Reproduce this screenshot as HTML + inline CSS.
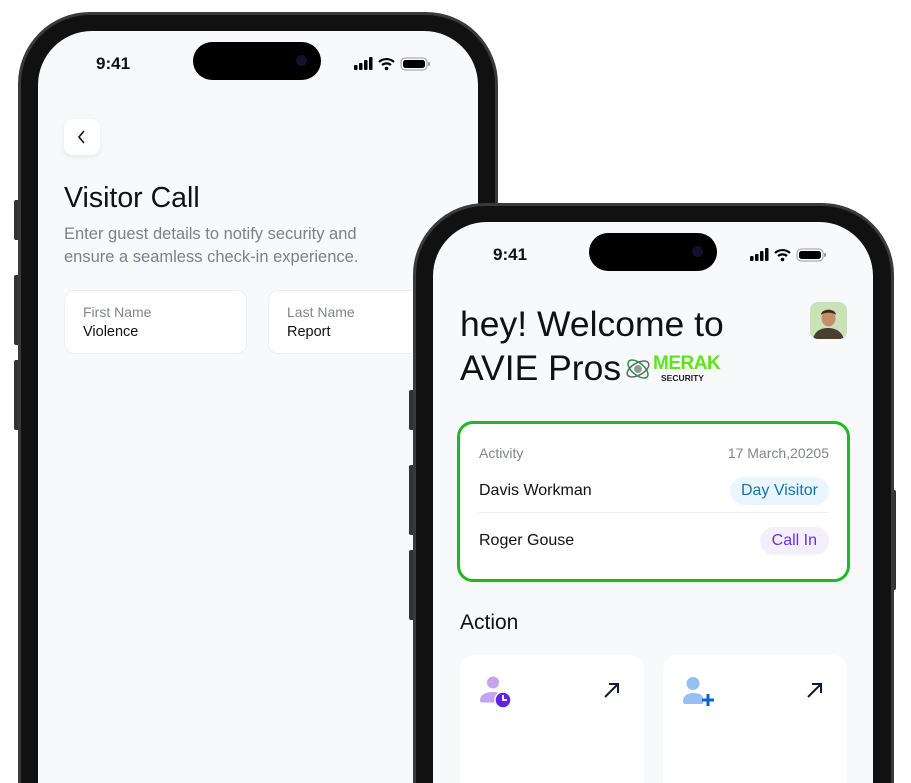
<!DOCTYPE html>
<html><head><meta charset="utf-8"><style>
*{margin:0;padding:0;box-sizing:border-box}
html{width:911px;height:783px;overflow:hidden}
body{width:911px;height:783px;background:#fff;position:relative;overflow:hidden;font-family:"Liberation Sans",sans-serif}
#wrap{position:absolute;left:0;top:0;width:911px;height:783px;overflow:hidden}
.frame{position:absolute;background:#111;border:3px solid #3a3a3a}
.screen{position:absolute;background:#f8f9fb;overflow:hidden}
.island{position:absolute;width:128px;height:38px;background:#000;border-radius:19px}
.island i{position:absolute;right:14px;top:13px;width:11px;height:11px;border-radius:50%;background:#10122a}
.time{position:absolute;font-weight:bold;font-size:17px;color:#111}
.stat{position:absolute}
.abs{position:absolute}
</style></head><body><div id="wrap">

<div class="abs" style="left:14px;top:200px;width:6px;height:40px;background:#333;border-radius:2px"></div>
<div class="abs" style="left:14px;top:275px;width:6px;height:70px;background:#333;border-radius:2px"></div>
<div class="abs" style="left:14px;top:360px;width:6px;height:70px;background:#333;border-radius:2px"></div>

<div class="frame" style="left:18px;top:12px;width:480px;height:860px;border-radius:72px"></div>
<div class="screen" style="left:38px;top:31px;width:440px;height:830px;border-radius:54px">
  <div class="island" style="left:155px;top:11px"><i></i></div>
  <div class="time" style="left:58px;top:23px">9:41</div>
  <svg class="stat" style="left:316px;top:25px" width="92" height="16" viewBox="0 0 92 16">
    <rect x="0" y="9" width="3.5" height="5" rx="1"/><rect x="5" y="7" width="3.5" height="7" rx="1"/><rect x="10" y="4" width="3.5" height="10" rx="1"/><rect x="15" y="1" width="3.5" height="13" rx="1"/>
    <path d="M25 6a11 11 0 0 1 15 0M28 9a7 7 0 0 1 9 0" stroke="#000" stroke-width="2.2" fill="none"/><circle cx="32.5" cy="12.5" r="1.8"/>
    <rect x="47" y="2" width="26" height="12" rx="4" fill="none" stroke="#999" stroke-width="1"/><rect x="49" y="4" width="22" height="8" rx="2.5"/><rect x="74" y="6" width="2" height="4" rx="1" fill="#999"/>
  </svg>
  <div class="abs" style="left:26px;top:88px;width:36px;height:36px;background:#fff;border-radius:9px;box-shadow:0 2px 6px rgba(0,0,0,.08)">
    <svg width="36" height="36"><path d="M20 12l-5 6 5 6" stroke="#111" stroke-width="1.6" fill="none"/></svg>
  </div>
  <div class="abs" style="left:26px;top:151px;font-size:28.5px;color:#111">Visitor Call</div>
  <div class="abs" style="left:26px;top:192px;font-size:16.5px;color:#7d818b;line-height:23px">Enter guest details to notify security and<br>ensure a seamless check-in experience.</div>
  <div class="abs" style="left:26px;top:259px;width:183px;height:64px;background:#fff;border:1px solid #eceef1;border-radius:10px">
    <div class="abs" style="left:18px;top:13px;font-size:14px;color:#80848d">First Name</div>
    <div class="abs" style="left:18px;top:33px;font-size:14.5px;color:#111">Violence</div>
  </div>
  <div class="abs" style="left:230px;top:259px;width:183px;height:64px;background:#fff;border:1px solid #eceef1;border-radius:10px">
    <div class="abs" style="left:18px;top:13px;font-size:14px;color:#80848d">Last Name</div>
    <div class="abs" style="left:18px;top:33px;font-size:14.5px;color:#111">Report</div>
  </div>
</div>

<div class="abs" style="left:409px;top:390px;width:6px;height:40px;background:#333;border-radius:2px"></div>
<div class="abs" style="left:409px;top:465px;width:6px;height:70px;background:#333;border-radius:2px"></div>
<div class="abs" style="left:409px;top:550px;width:6px;height:70px;background:#333;border-radius:2px"></div>
<div class="abs" style="left:891px;top:490px;width:5px;height:100px;background:#333;border-radius:2px"></div>

<div class="frame" style="left:413px;top:203px;width:481px;height:700px;border-radius:72px"></div>
<div class="screen" style="left:433px;top:222px;width:440px;height:680px;border-radius:54px">
  <div class="island" style="left:156px;top:11px"><i></i></div>
  <div class="time" style="left:60px;top:23px">9:41</div>
  <svg class="stat" style="left:317px;top:25px" width="92" height="16" viewBox="0 0 92 16">
    <rect x="0" y="9" width="3.5" height="5" rx="1"/><rect x="5" y="7" width="3.5" height="7" rx="1"/><rect x="10" y="4" width="3.5" height="10" rx="1"/><rect x="15" y="1" width="3.5" height="13" rx="1"/>
    <path d="M25 6a11 11 0 0 1 15 0M28 9a7 7 0 0 1 9 0" stroke="#000" stroke-width="2.2" fill="none"/><circle cx="32.5" cy="12.5" r="1.8"/>
    <rect x="47" y="2" width="26" height="12" rx="4" fill="none" stroke="#999" stroke-width="1"/><rect x="49" y="4" width="22" height="8" rx="2.5"/><rect x="74" y="6" width="2" height="4" rx="1" fill="#999"/>
  </svg>
  <div class="abs" style="left:27px;top:80px;font-size:35.5px;color:#111;line-height:44px">hey! Welcome to<br>AVIE Pros</div>
  <svg class="abs" style="left:191px;top:133px" width="28" height="28" viewBox="0 0 28 28"><ellipse cx="14" cy="14" rx="12" ry="6" fill="none" stroke="#666" stroke-width="1.5" transform="rotate(-30 14 14)"/><ellipse cx="14" cy="14" rx="12" ry="6" fill="none" stroke="#1a9a3a" stroke-width="1.5" transform="rotate(40 14 14)"/><circle cx="14" cy="14" r="4" fill="#999"/></svg>
  <div class="abs" style="left:220px;top:131px;font-size:19px;font-weight:bold;color:#5ce51a;letter-spacing:-.5px">MERAK</div>
  <div class="abs" style="left:228px;top:151px;font-size:8.5px;font-weight:bold;color:#222">SECURITY</div>
  <div class="abs" style="left:377px;top:80px;width:37px;height:37px;border-radius:8px;background:#c9e2b8;overflow:hidden">
    <svg width="37" height="37"><path d="M3 37c2-9 9-11 15-11s13 2 16 11z" fill="#4a3e30"/><ellipse cx="18.5" cy="16" rx="7" ry="8.5" fill="#c58f6c"/><path d="M11 13c0-7 15-7 15 0c-2-3-13-3-15 0z" fill="#3a2c22"/></svg>
  </div>
  <div class="abs" style="left:24px;top:199px;width:393px;height:161px;background:#fff;border:3px solid #1dbb1d;border-radius:16px">
    <div class="abs" style="left:19px;top:21px;font-size:14px;color:#80848d">Activity</div>
    <div class="abs" style="right:18px;top:21px;font-size:14px;color:#80848d">17 March,20205</div>
    <div class="abs" style="left:19px;top:58px;font-size:16px;color:#111">Davis Workman</div>
    <div class="abs" style="right:18px;top:53px;height:28px;padding:0 11px;line-height:28px;border-radius:14px;background:#eaf6fd;color:#1673ae;font-size:16px">Day Visitor</div>
    <div class="abs" style="left:19px;right:18px;top:88px;height:1px;background:#eceef1"></div>
    <div class="abs" style="left:19px;top:108px;font-size:16px;color:#111">Roger Gouse</div>
    <div class="abs" style="right:18px;top:103px;height:28px;padding:0 12px;line-height:28px;border-radius:14px;background:#f3effd;color:#6a2ee8;font-size:16px">Call In</div>
  </div>
  <div class="abs" style="left:27px;top:389px;font-size:21px;color:#111">Action</div>
  <div class="abs" style="left:27px;top:433px;width:184px;height:300px;background:#fff;border-radius:14px">
    <svg class="abs" style="left:19px;top:20px" width="34" height="34" viewBox="0 0 34 34"><circle cx="14" cy="7.5" r="6" fill="#c2a4f0"/><path d="M1 26c0-6 5-9 13-9c3 0 5 .5 7 1.5l-3 9H3c-1 0-2-.5-2-1.5z" fill="#c2a4f0"/><circle cx="24" cy="25" r="8" fill="#5f22e0" stroke="#fff" stroke-width="1.5"/><path d="M24 20v5h4" stroke="#fff" stroke-width="1.8" fill="none"/></svg>
    <svg class="abs" style="left:142px;top:25px" width="20" height="20" viewBox="0 0 20 20"><path d="M3 17L16 4M7 4h9v9" stroke="#111a33" stroke-width="2" fill="none"/></svg>
  </div>
  <div class="abs" style="left:230px;top:433px;width:184px;height:300px;background:#fff;border-radius:14px">
    <svg class="abs" style="left:19px;top:20px" width="34" height="34" viewBox="0 0 34 34"><circle cx="11" cy="8.5" r="6.5" fill="#96bff2"/><path d="M1 27c0-6 4-9 10-9s9 2 10 4v7H3c-1 0-2-1-2-2z" fill="#96bff2"/><path d="M18 1a7 7 0 0 1 0 14a5 5 0 0 0 0-14z" fill="#0b5fd8"/><path d="M26 19v12M20 25h12" stroke="#0b5fd8" stroke-width="3"/></svg>
    <svg class="abs" style="left:142px;top:25px" width="20" height="20" viewBox="0 0 20 20"><path d="M3 17L16 4M7 4h9v9" stroke="#111a33" stroke-width="2" fill="none"/></svg>
  </div>
</div>
</div></body></html>
